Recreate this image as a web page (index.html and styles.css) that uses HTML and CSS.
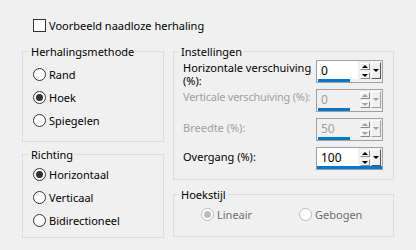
FILE: index.html
```html
<!DOCTYPE html>
<html lang="nl">
<head>
    <meta charset="UTF-8">
    <title>Naadloze herhaling</title>
    <link rel="stylesheet" href="styles.css">
</head>
<body>
    <!--dialoogvenster-->
    <div class="dialog">
        <div class="check-row"><span class="checkbox"></span>Voorbeeld naadloze herhaling</div>

        <div class="columns">
            <!--linker kolom-->
            <div class="col col-left">
                <fieldset class="group group-method">
                    <legend>Herhalingsmethode</legend>
                    <div class="option"><span class="radio"></span>Rand</div>
                    <div class="option"><span class="radio on"></span>Hoek</div>
                    <div class="option"><span class="radio"></span>Spiegelen</div>
                </fieldset>
                <fieldset class="group group-dir">
                    <legend>Richting</legend>
                    <div class="option"><span class="radio on"></span>Horizontaal</div>
                    <div class="option"><span class="radio"></span>Verticaal</div>
                    <div class="option"><span class="radio"></span>Bidirectioneel</div>
                </fieldset>
            </div>

            <!--rechter kolom-->
            <div class="col col-right">
                <fieldset class="group group-settings">
                    <legend>Instellingen</legend>
                    <div class="field-grid">
                        <div class="lbl">Horizontale verschuiving<br>(%):</div>
                        <div class="spin">
                            <div class="spin-top">
                                <div class="spin-value">0</div>
                                <div class="spin-steps"><span class="step up"></span><span class="step down"></span></div>
                                <span class="spin-drop"></span>
                            </div>
                            <div class="spin-bar"><span class="spin-fill" style="width: 32px"></span></div>
                        </div>

                        <div class="lbl tight off">Verticale verschuiving (%):</div>
                        <div class="spin off">
                            <div class="spin-top">
                                <div class="spin-value">0</div>
                                <div class="spin-steps"><span class="step up"></span><span class="step down"></span></div>
                                <span class="spin-drop"></span>
                            </div>
                            <div class="spin-bar"><span class="spin-fill" style="width: 32px"></span></div>
                        </div>

                        <div class="lbl low off">Breedte (%):</div>
                        <div class="spin off">
                            <div class="spin-top">
                                <div class="spin-value">50</div>
                                <div class="spin-steps"><span class="step up"></span><span class="step down"></span></div>
                                <span class="spin-drop"></span>
                            </div>
                            <div class="spin-bar"><span class="spin-fill" style="width: 32px"></span></div>
                        </div>

                        <div class="lbl low">Overgang (%):</div>
                        <div class="spin">
                            <div class="spin-top">
                                <div class="spin-value">100</div>
                                <div class="spin-steps"><span class="step up"></span><span class="step down"></span></div>
                                <span class="spin-drop"></span>
                            </div>
                            <div class="spin-bar full"><span class="spin-fill" style="width: 65px"></span></div>
                        </div>
                    </div>
                </fieldset>
                <fieldset class="group group-corner">
                    <legend>Hoekstijl</legend>
                    <div class="corner-row">
                        <div class="option off"><span class="radio on"></span>Lineair</div>
                        <div class="option off"><span class="radio"></span>Gebogen</div>
                    </div>
                </fieldset>
            </div>
        </div>
    </div>
</body>
</html>
```
FILE: styles.css
```css
*{
    margin: 0;
    padding: 0;
    box-sizing: border-box;
}

body{
    width: 416px;
    height: 250px;
    overflow: hidden;
    background-color: #f0f0f0;
    font-family: "Noto Sans", "Open Sans", sans-serif;
    font-size: 11px;
    color: #000;
}

/*dialoog*/
.dialog{
    padding: 19px 0 0 22px;
}

/*selectievakje bovenaan*/
.check-row{
    display: flex;
    align-items: center;
    gap: 3px;
    height: 13px;
    margin-left: 11px;
    white-space: nowrap;
}

.checkbox{
    width: 13px;
    height: 13px;
    border: 1px solid #333;
    background-color: #fff;
}

/*twee kolommen*/
.columns{
    display: flex;
    gap: 9px;
    margin-top: 12px;
}

.col{
    display: flex;
    flex-direction: column;
}

.col-left{
    width: 142px;
    gap: 5px;
}

.col-right{
    width: 221px;
    gap: 7px;
}

/*groepsvakken*/
.group{
    border: 1px solid #dcdcdc;
    min-width: 0;
}

.group legend{
    padding: 0 2px;
    margin-left: -4px;
    line-height: 15px;
    white-space: nowrap;
}

.group-method{
    padding: 4px 0 9px 10px;
}

.group-dir{
    padding: 1px 0 5px 10px;
}

.group-settings{
    padding: 1px 10px 9px 9px;
}

.group-corner{
    padding: 1px 0 10px 27px;
}

.group-corner legend{
    margin-left: -22px;
}

/*keuzerondjes*/
.option{
    display: flex;
    align-items: center;
    gap: 3px;
    height: 23px;
    white-space: nowrap;
}

.option.off{
    color: #6d6d6d;
}

.radio{
    display: flex;
    align-items: center;
    justify-content: center;
    width: 13px;
    height: 13px;
    border: 1px solid #333;
    border-radius: 50%;
    background-color: #fff;
}

.radio.on::after{
    content: "";
    width: 7px;
    height: 7px;
    border-radius: 50%;
    background-color: #333;
}

.option.off .radio{
    border-color: #bcbcbc;
}

.option.off .radio.on::after{
    background-color: #bcbcbc;
}

.corner-row{
    display: grid;
    grid-template-columns: 98px 98px;
}

/*instellingen*/
.field-grid{
    display: grid;
    grid-template-columns: 1fr 67px;
    grid-auto-rows: 23px;
    row-gap: 6px;
}

.lbl{
    padding-top: 1px;
    line-height: 13px;
    white-space: nowrap;
}

.lbl.low{
    padding-top: 3px;
}

.lbl.tight{
    letter-spacing: -0.25px;
}

.lbl.off{
    color: #a0a0a0;
}

/*draaivak*/
.spin{
    display: flex;
    flex-direction: column;
    width: 67px;
    height: 23px;
    border: 1px solid #a0a0a0;
    background-color: #f0f0f0;
}

.spin-top{
    display: flex;
    height: 18px;
}

.spin-value{
    width: 41px;
    padding: 1px 0 0 4px;
    background-color: #fff;
    font-size: 12px;
    line-height: 17px;
}

.spin.off .spin-value{
    background-color: #f0f0f0;
    color: #a0a0a0;
}

.spin-steps{
    display: flex;
    flex-direction: column;
    gap: 2px;
    width: 13px;
    padding: 2px 1px 0 2px;
}

.step{
    display: flex;
    align-items: center;
    justify-content: center;
    width: 10px;
    height: 7px;
    border: 1px solid;
    border-color: #fff #8a8a8a #8a8a8a #fff;
}

.step.up::before{
    content: "";
    border-left: 3px solid transparent;
    border-right: 3px solid transparent;
    border-bottom: 3px solid #000;
}

.step.down::before{
    content: "";
    border-left: 3px solid transparent;
    border-right: 3px solid transparent;
    border-top: 3px solid #000;
}

.spin-drop{
    display: flex;
    justify-content: center;
    width: 10px;
    height: 17px;
    margin-top: 1px;
    padding-top: 6px;
    border: 1px solid;
    border-color: #fff #555 #555 #fff;
}

.spin-drop::before{
    content: "";
    height: 0;
    border-left: 3px solid transparent;
    border-right: 3px solid transparent;
    border-top: 3px solid #000;
}

.spin.off .step.up::before{
    border-bottom-color: #a0a0a0;
}

.spin.off .step.down::before,
.spin.off .spin-drop::before{
    border-top-color: #a0a0a0;
}

.spin.off .spin-drop{
    border-color: #fff #a0a0a0 #a0a0a0 #fff;
}

.spin-bar{
    height: 3px;
    padding-left: 1px;
}

.spin-bar.full{
    padding-left: 0;
}

.spin-fill{
    display: block;
    height: 3px;
    background-color: #0078d7;
}
```
